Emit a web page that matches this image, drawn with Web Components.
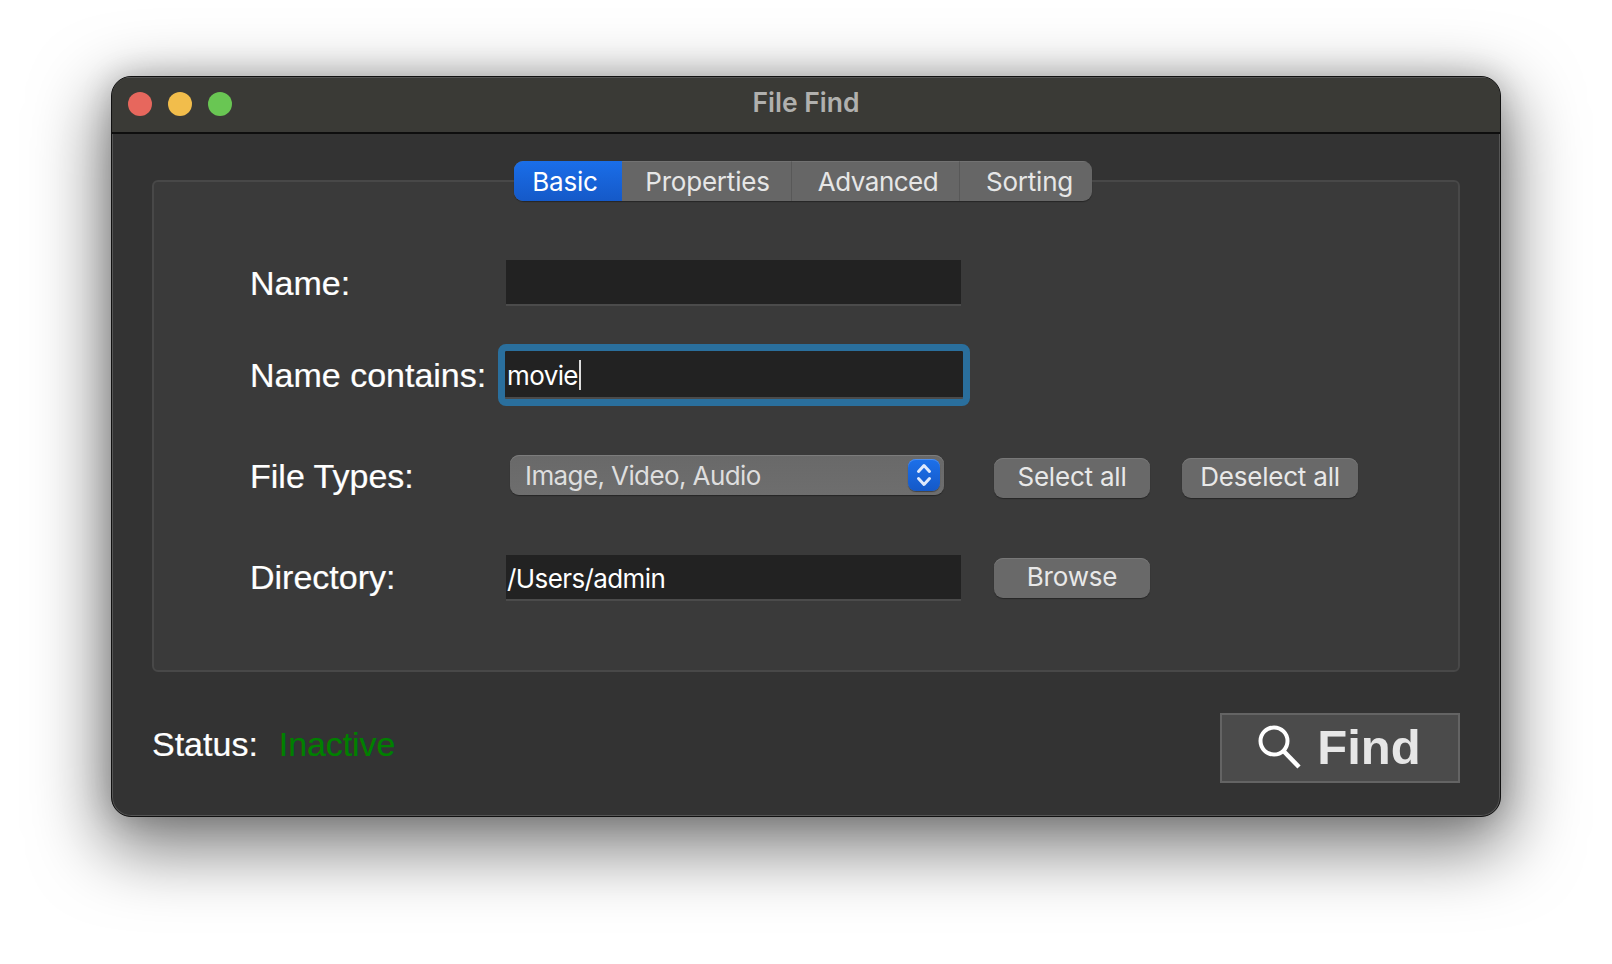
<!DOCTYPE html>
<html>
<head>
<meta charset="utf-8">
<title>File Find</title>
<style>
    html, body { margin: 0; height: 100%; }
    body { background: #fff; padding: 76px 0 0 111px; box-sizing: border-box; overflow: hidden; font-family: "Liberation Sans", Arial, sans-serif; }
</style>
</head>
<body>
<mac-window title="File Find">
    <tab-group>
        <tab-button active style="padding-right:6px">Basic</tab-button>
        <tab-button style="width:170px;padding-left:2px">Properties</tab-button>
        <tab-button style="width:168px;padding-left:5px;letter-spacing:-.5px">Advanced</tab-button>
        <tab-button style="width:132px;padding-left:7px">Sorting</tab-button>
    </tab-group>
    <group-box>
        <form-row label="Name:" style="margin-top:77px"><text-field></text-field></form-row>
        <form-row label="Name contains:" style="margin-top:45px"><text-field focused value="movie"></text-field></form-row>
        <form-row label="File Types:" style="margin-top:56px">
            <popup-select value="Image, Video, Audio"></popup-select>
            <push-button slot="actions" style="width:156px;margin-top:3px;padding-bottom:4px">Select all</push-button>
            <push-button slot="actions" style="width:176px;margin-top:3px;padding-bottom:4px">Deselect all</push-button>
        </form-row>
        <form-row label="Directory:" style="margin-top:57px;--label-lift:2px">
            <text-field value="/Users/admin"></text-field>
            <push-button slot="actions" style="width:156px;padding-bottom:4px">Browse</push-button>
        </form-row>
    </group-box>
    <status-bar label="Status:" state="Inactive">
        <find-button>Find</find-button>
    </status-bar>
</mac-window>

<script>
class MacWindow extends HTMLElement {
    constructor() {
        super();
        const Shadow = this.attachShadow({mode: "open"});
        Shadow.innerHTML = `
        <style>
            :host {
                display: block;
                width: 1390px;
                height: 741px;
                box-sizing: border-box;
                border: 1px solid #111;
                border-radius: 20px;
                overflow: hidden;
                background: #333;
                box-shadow: 0 0 0 1px #555 inset, 0 24px 70px 8px rgba(0,0,0,.52), 0 0 30px rgba(0,0,0,.18);
            }
            .Bar {
                position: relative;
                height: 50px;
                padding-bottom: 5px;
                display: flex;
                align-items: center;
                justify-content: center;
                background: #3a3a36;
                border-bottom: 2px solid #0e0e0e;
                box-shadow: 0 1px 0 #555 inset;
                color: #b0b0ae;
                font: 600 26.5px Inter, "Liberation Sans", sans-serif;
            }
            .Lights {
                position: absolute;
                left: 16px;
                top: 15px;
                display: flex;
                gap: 16px;
            }
            .Lights i { width: 24px; height: 24px; border-radius: 50%; }
            .Body { padding: 27px 40px 0 40px; }
        </style>
        <div class="Bar">
            <div class="Lights">
                <i style="background:#e7675d"></i>
                <i style="background:#f2bd4b"></i>
                <i style="background:#69c653"></i>
            </div>
            <span class="Title"></span>
        </div>
        <div class="Body"><slot></slot></div>
        `;
    }

    connectedCallback() {
        this.shadowRoot.querySelector(".Title").textContent = this.getAttribute("title");
    }
}

class TabGroup extends HTMLElement {
    constructor() {
        super();
        const Shadow = this.attachShadow({mode: "open"});
        Shadow.innerHTML = `
        <style>
            :host {
                display: flex;
                position: relative;
                z-index: 1;
                width: 578px;
                height: 40px;
                margin: 0 0 -21px 362px;
                border-radius: 9px;
                overflow: hidden;
                background: #666;
                box-shadow: 0 1px 1px rgba(0,0,0,.35);
            }
        </style>
        <slot></slot>
        `;
    }
}

class TabButton extends HTMLElement {
    constructor() {
        super();
        const Shadow = this.attachShadow({mode: "open"});
        Shadow.innerHTML = `
        <style>
            :host {
                display: flex;
                align-items: center;
                justify-content: center;
                box-sizing: border-box;
                width: 108px;
                border-right: 1px solid #585858;
                border-top: 1px solid #727272;
                color: #e6e6e6;
                font: 26px Inter, "Liberation Sans", sans-serif;
                letter-spacing: -.2px;
            }
            :host(:last-child) { border-right: 0; }
            :host([active]) {
                border: 0;
                color: #fff;
                background: linear-gradient(#1a6ee9, #1559c8);
            }
        </style>
        <slot></slot>
        `;
    }
}

class GroupBox extends HTMLElement {
    constructor() {
        super();
        const Shadow = this.attachShadow({mode: "open"});
        Shadow.innerHTML = `
        <style>
            :host {
                display: block;
                box-sizing: border-box;
                width: 1308px;
                height: 492px;
                padding-top: 1px;
                border: 2px solid #484848;
                border-radius: 6px;
                background: #3a3a3a;
            }
        </style>
        <slot></slot>
        `;
    }
}

class FormRow extends HTMLElement {
    constructor() {
        super();
        const Shadow = this.attachShadow({mode: "open"});
        Shadow.innerHTML = `
        <style>
            :host {
                display: grid;
                grid-template-columns: 256px 457px auto;
                align-items: center;
                padding-left: 96px;
            }
            .Label {
                padding-bottom: var(--label-lift, 0);
                color: #fff;
                font: 34px "Liberation Sans", Arial, sans-serif;
                -webkit-text-stroke: .2px #fff;
            }
            .Actions { display: flex; gap: 32px; margin-left: 31px; }
        </style>
        <div class="Label"></div>
        <div><slot></slot></div>
        <div class="Actions"><slot name="actions"></slot></div>
        `;
    }

    connectedCallback() {
        this.shadowRoot.querySelector(".Label").textContent = this.getAttribute("label");
    }
}

class TextField extends HTMLElement {
    constructor() {
        super();
        const Shadow = this.attachShadow({mode: "open"});
        Shadow.innerHTML = `
        <style>
            :host {
                display: flex;
                align-items: center;
                box-sizing: border-box;
                width: 455px;
                height: 46px;
                padding: 2px 2px 0 1px;
                background: #222;
                border-bottom: 2px solid #4b4b4b;
                color: #fff;
                font: 26px Inter, "Liberation Sans", sans-serif;
                letter-spacing: -.6px;
            }
            :host([focused]) {
                width: 458px;
                height: 48px;
                margin-left: -1px;
                padding-left: 2px;
                border-radius: 1px;
                outline: 7px solid #2a6f9d;
                outline-offset: 0;
                box-shadow: 0 0 0 1px #444;
            }
            .Caret { display: none; width: 2px; height: 30px; margin-left: 1px; background: #ddd; }
            :host([focused]) .Caret { display: block; }
        </style>
        <span class="Value"></span><span class="Caret"></span>
        `;
    }

    connectedCallback() {
        this.shadowRoot.querySelector(".Value").textContent = this.getAttribute("value") || "";
    }
}

class PopupSelect extends HTMLElement {
    constructor() {
        super();
        const Shadow = this.attachShadow({mode: "open"});
        Shadow.innerHTML = `
        <style>
            :host {
                display: flex;
                align-items: center;
                justify-content: space-between;
                box-sizing: border-box;
                width: 434px;
                height: 40px;
                margin: 0 0 3px 4px;
                padding: 0 4px 0 15px;
                border-radius: 9px;
                background: linear-gradient(#696969, #6e6e6e);
                box-shadow: 0 1px 0 #7c7c7c inset, 0 1px 1px rgba(0,0,0,.35);
                color: #dedede;
                font: 26px Inter, "Liberation Sans", sans-serif;
                letter-spacing: -.6px;
            }
            .Stepper {
                display: flex;
                align-items: center;
                justify-content: center;
                width: 32px;
                height: 32px;
                border-radius: 8px;
                background: linear-gradient(#1c70ea, #1559c8);
                box-shadow: 0 1px 0 #4d8ff0 inset, 0 1px 1px rgba(0,0,0,.4);
            }
        </style>
        <span class="Value"></span>
        <span class="Stepper">
            <svg width="32" height="32" viewBox="0 0 32 32" fill="none" stroke="#dfe9fb" stroke-width="3" stroke-linecap="round" stroke-linejoin="round">
                <path d="M10.5 12.5 16 6.5l5.5 6"/>
                <path d="M10.5 19.5 16 25.5l5.5-6"/>
            </svg>
        </span>
        `;
    }

    connectedCallback() {
        this.shadowRoot.querySelector(".Value").textContent = this.getAttribute("value");
    }
}

class PushButton extends HTMLElement {
    constructor() {
        super();
        const Shadow = this.attachShadow({mode: "open"});
        Shadow.innerHTML = `
        <style>
            :host {
                display: flex;
                align-items: center;
                justify-content: center;
                box-sizing: border-box;
                height: 40px;
                padding-bottom: 2px;
                border-radius: 9px;
                background: #696969;
                box-shadow: 0 1px 0 #787878 inset, 0 1px 1px rgba(0,0,0,.35);
                color: #e8e8e8;
                font: 26px Inter, "Liberation Sans", sans-serif;
                letter-spacing: -.2px;
            }
        </style>
        <slot></slot>
        `;
    }
}

class StatusBar extends HTMLElement {
    constructor() {
        super();
        const Shadow = this.attachShadow({mode: "open"});
        Shadow.innerHTML = `
        <style>
            :host {
                display: flex;
                align-items: flex-start;
                justify-content: space-between;
                width: 1308px;
                margin-top: 41px;
                font: 34px "Liberation Sans", Arial, sans-serif;
            }
            .Text { display: flex; gap: 21px; margin-top: 12px; color: #fff; -webkit-text-stroke: .2px; }
            .State { color: #008000; letter-spacing: -.1px; }
        </style>
        <div class="Text"><span class="Label"></span><span class="State"></span></div>
        <slot></slot>
        `;
    }

    connectedCallback() {
        this.shadowRoot.querySelector(".Label").textContent = this.getAttribute("label");
        this.shadowRoot.querySelector(".State").textContent = this.getAttribute("state");
    }
}

class FindButton extends HTMLElement {
    constructor() {
        super();
        const Shadow = this.attachShadow({mode: "open"});
        Shadow.innerHTML = `
        <style>
            :host {
                display: flex;
                align-items: center;
                justify-content: center;
                gap: 15px;
                box-sizing: border-box;
                width: 240px;
                height: 70px;
                padding-bottom: 2px;
                border: 2px solid #646464;
                background: #4b4b4b;
                color: #e6e6e6;
                font: bold 49px "Liberation Sans", Arial, sans-serif;
            }
            svg { display: block; margin: -1px 0 0 -1px; }
        </style>
        <svg width="44" height="44" viewBox="0 0 44 44" fill="none" stroke="#fff" stroke-width="4">
            <circle cx="16" cy="16" r="13.5"/>
            <path d="M25.5 26 41 42" stroke-width="4.5"/>
        </svg>
        <span><slot></slot></span>
        `;
    }
}

customElements.define("mac-window", MacWindow);
customElements.define("tab-group", TabGroup);
customElements.define("tab-button", TabButton);
customElements.define("group-box", GroupBox);
customElements.define("form-row", FormRow);
customElements.define("text-field", TextField);
customElements.define("popup-select", PopupSelect);
customElements.define("push-button", PushButton);
customElements.define("status-bar", StatusBar);
customElements.define("find-button", FindButton);
</script>
</body>
</html>
